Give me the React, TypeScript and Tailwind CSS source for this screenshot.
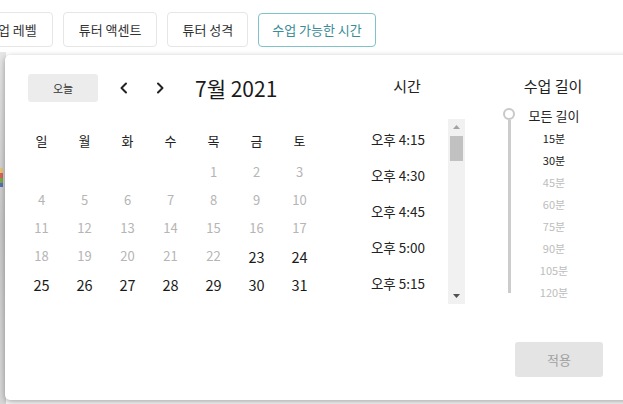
import React from 'react'

const weekdays = ['일', '월', '화', '수', '목', '금', '토']
const times = ['오후 4:15', '오후 4:30', '오후 4:45', '오후 5:00', '오후 5:15']
const durations = [
  { label: '모든 길이', on: true, head: true },
  { label: '15분', on: true },
  { label: '30분', on: true },
  { label: '45분', on: false },
  { label: '60분', on: false },
  { label: '75분', on: false },
  { label: '90분', on: false },
  { label: '105분', on: false },
  { label: '120분', on: false },
]

const tabs = [
  { label: '수업 레벨', pad: 'px-[15px]' },
  { label: '튜터 액센트', pad: 'px-[15px]' },
  { label: '튜터 성격', pad: 'px-[14px]' },
]

// July 2021 starts on Thursday
const cells: (number | null)[] = [null, null, null, null, ...Array.from({ length: 31 }, (_, i) => i + 1)]

function Chevron({ dir }: { dir: 'left' | 'right' }) {
  return (
    <svg width="10" height="12" viewBox="0 0 10 12" fill="none">
      <polyline
        points={dir === 'left' ? '7,1.5 2.5,6 7,10.5' : '3,1.5 7.5,6 3,10.5'}
        stroke="#222"
        strokeWidth="2"
        strokeLinecap="round"
        strokeLinejoin="round"
      />
    </svg>
  )
}

export default function App() {
  return (
    <div
      className="relative w-[623px] h-[404px] overflow-hidden bg-white text-[#222]"
      style={{ fontFamily: "'Noto Sans CJK KR', 'Noto Sans', sans-serif" }}
    >
      {/* filter tabs */}
      <div className="flex gap-[10px] ml-[-30px] pt-[12px]">
        {tabs.map((t) => (
          <button
            key={t.label}
            className={
              'h-[35px] rounded-[4px] border border-[#e6e6e6] bg-white text-[13px] text-[#333] ' + t.pad
            }
          >
            {t.label}
          </button>
        ))}
        <button className="h-[34px] mt-[1px] px-[13px] rounded-[4px] border border-[#7fc2c7] bg-white text-[13px] text-[#3a8c97]">
          수업 가능한 시간
        </button>
      </div>

      {/* blurred page content behind the popup */}
      <div className="absolute left-0 top-[52px] w-[6px] h-[352px] bg-[linear-gradient(180deg,#e6e6e6_0%,#d4d4d4_30%,#c9c9c9_50%,#d8d8d8_100%)]">
        <div className="mt-[116px] h-[5px] w-[3px] bg-[#e9c77a]" />
        <div className="h-[5px] w-[3px] bg-[#d9655b]" />
        <div className="h-[5px] w-[3px] bg-[#7aa94a]" />
        <div className="h-[4px] w-[3px] bg-[#5670b8]" />
      </div>

      {/* popup */}
      <div className="relative ml-[5px] mt-[8px] w-[640px] rounded-[5px] bg-white shadow-[0_2px_6px_rgba(0,0,0,0.35)] pl-[15px] pt-[19px] pb-[23px]">
        <div className="flex h-[268px]">
          {/* calendar */}
          <div className="w-[301px]">
            <div className="flex items-center h-[28px]">
              <button className="ml-[8px] w-[70px] h-[28px] rounded-[3px] bg-[#ececec] text-[11px] text-[#333]">
                오늘
              </button>
              <button className="ml-[16px] w-[20px] h-[20px] flex items-center justify-center">
                <Chevron dir="left" />
              </button>
              <button className="ml-[16px] w-[20px] h-[20px] flex items-center justify-center">
                <Chevron dir="right" />
              </button>
              <div className="ml-[25px] text-[21px] leading-none text-[#1a1a1a]">7월 2021</div>
            </div>
            <div className="mt-[25px] grid grid-cols-7">
              {weekdays.map((d) => (
                <div key={d} className="h-[28px] flex items-center justify-center text-[13px] text-[#222]">
                  {d}
                </div>
              ))}
            </div>
            <div className="mt-[3px] grid grid-cols-7">
              {cells.map((n, i) => (
                <div
                  key={i}
                  className={
                    'h-[28px] flex items-center justify-center ' +
                    (n !== null && n >= 23 ? 'text-[#1a1a1a] text-[14.5px] pt-[2px]' : 'text-[13px] text-[#b5b5b5]')
                  }
                >
                  {n}
                </div>
              ))}
            </div>
          </div>

          {/* time */}
          <div className="ml-[16px] w-[140px]">
            <div className="h-[24px] flex items-center justify-center text-[15px] text-[#222]">시간</div>
            <div className="mt-[21px] ml-[11px] flex h-[185px]">
              <div className="w-[100px] pt-[2px]">
                {times.map((t) => (
                  <div key={t} className="h-[36px] flex items-center justify-center text-[13.5px] text-[#222]">
                    {t}
                  </div>
                ))}
              </div>
              <div className="w-[17px] bg-[#f1f1f1] flex flex-col items-center">
                <svg width="9" height="17" viewBox="0 0 9 17">
                  <polygon points="1,10 8,10 4.5,6" fill="#a3a3a3" />
                </svg>
                <div className="w-[13px] h-[25px] bg-[#c1c1c1]" />
                <div className="flex-1" />
                <svg width="9" height="17" viewBox="0 0 9 17">
                  <polygon points="1,7 8,7 4.5,11" fill="#505050" />
                </svg>
              </div>
            </div>
          </div>

          {/* duration */}
          <div className="w-[152px]">
            <div className="h-[24px] flex items-center justify-center text-[15px] text-[#222]">수업 길이</div>
            <div className="mt-[7px] flex">
              <div className="ml-[26px] w-[12px] pt-[3px] flex flex-col items-center">
                <div className="w-[12px] h-[12px] rounded-full border-2 border-[#c8c8c8] bg-white" />
                <div className="w-[3px] h-[173px] bg-[#cccccc]" />
              </div>
              <div className="w-[78px]">
                {durations.map((d) => (
                  <div
                    key={d.label}
                    className={
                      'h-[22px] flex items-center justify-center ' +
                      (d.head ? 'text-[13px] ' : 'text-[11px] ') +
                      (d.on ? 'text-[#222]' : 'text-[#bdbdbd]')
                    }
                  >
                    {d.label}
                  </div>
                ))}
              </div>
            </div>
          </div>
        </div>

        {/* footer */}
        <div className="w-[583px] flex justify-end">
          <button className="w-[88px] h-[35px] rounded-[3px] bg-[#e4e4e4] text-[13px] text-[#a0a0a0]">적용</button>
        </div>
      </div>
    </div>
  )
}
